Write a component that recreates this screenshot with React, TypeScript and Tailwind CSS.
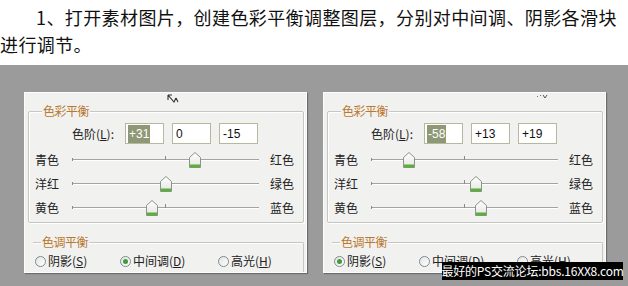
import React from 'react';

const cjk = { fontFamily: '"Noto Sans CJK SC", "Noto Sans", sans-serif' };

type PanelProps = {
  values: [string, string, string];
  thumbs: [number, number, number];
  checked: number;
  cursor: 'arrow' | 'dots';
};

const Thumb: React.FC<{ left: number }> = ({ left }) => (
  <svg className="absolute top-0" style={{ left }} width="12" height="16" viewBox="0 0 12 16">
    <defs>
      <linearGradient id="tg" x1="0" y1="0" x2="0" y2="1">
        <stop offset="0" stopColor="#ffffff" />
        <stop offset="1" stopColor="#e4e6e0" />
      </linearGradient>
    </defs>
    <path d="M0.5 5.5 L6 0.5 L11.5 5.5 V15.5 H0.5 Z" fill="url(#tg)" stroke="#8a9488" />
    <rect x="1" y="12.5" width="10" height="3" fill="#5dae3e" />
  </svg>
);

const Slider: React.FC<{ left: string; right: string; thumb: number }> = ({ left, right, thumb }) => (
  <div className="flex h-[24px] items-center">
    <span className="w-[37px] text-[12px] text-[#222]">{left}</span>
    <div className="relative h-[16px] w-[187px]">
      <div className="absolute left-0 right-0 top-[7px] h-[2px] border-t border-[#a2a4a0] bg-white" />
      <div className="absolute left-0 top-[6px] h-[3px] w-px bg-[#888]" />
      <div className="absolute left-[93px] top-[4px] h-[4px] w-px bg-[#8a8a8a]" />
      <Thumb left={thumb} />
    </div>
    <span className="ml-[11px] text-[12px] text-[#222]">{right}</span>
  </div>
);

const Radio: React.FC<{ on: boolean; label: string; k: string; w: string }> = ({ on, label, k, w }) => (
  <div className={`flex items-center ${w}`}>
    <span className="flex h-[11px] w-[11px] items-center justify-center rounded-full border border-[#7d8b96] bg-gradient-to-br from-[#e4e4e0] to-white">
      {on && <span className="h-[5px] w-[5px] rounded-full bg-[#3f9c3a]" />}
    </span>
    <span className="ml-[2px] text-[12px] leading-[16px] text-[#222]">
      {label}(<span className="underline">{k}</span>)
    </span>
  </div>
);

const Panel: React.FC<PanelProps> = ({ values, thumbs, checked, cursor }) => (
  <div className="relative flex h-[181px] w-[283px] flex-col border border-[#fcfcfc] bg-[#f1f1ef] shadow-[1px_1px_1px_rgba(0,0,0,0.3)]">
    {cursor === 'arrow' ? (
      <svg className="absolute left-[142px] top-[1px]" width="12" height="10" viewBox="0 0 12 10">
        <path d="M1 1 V6 M1 1 H5 M1 1 L7 8 L9 4 M9 4 L11 8" stroke="#333" strokeWidth="1.1" fill="none" />
      </svg>
    ) : (
      <svg className="absolute left-[212px] top-[1px]" width="12" height="6" viewBox="0 0 12 6">
        <rect x="1" y="2" width="1" height="1" fill="#777" />
        <rect x="4" y="1" width="1" height="1" fill="#777" />
        <path d="M7 1 L9 4 L11 1" stroke="#555" strokeWidth="1" fill="none" />
      </svg>
    )}
    <div className="relative ml-[3px] mt-[18px] w-[276px] rounded-[2px] border border-[#c6c6c2] pb-[2px] pt-[11px] shadow-[inset_1px_1px_0_#fff,1px_1px_0_#fff]">
      <span className="absolute left-[13px] top-[-9px] bg-[#f1f1ef] px-[1px] text-[12px] leading-[16px] tracking-[-0.5px] text-[#b9782f]">
        色彩平衡
      </span>
      <div className="flex h-[21px] items-center pl-[43px]">
        <span className="w-[53px] text-[12px] text-[#222]">
          色阶(<span className="underline">L</span>):
        </span>
        <div className="flex gap-[8px]">
          {values.map((v, i) => (
            <div
              key={i}
              className="flex h-[21px] w-[39px] items-center border border-[#b7b89d] bg-white px-[2px] text-[12px] text-[#111]"
              style={{ fontFamily: '"Liberation Sans", sans-serif' }}
            >
              <span className={i === 0 ? 'bg-[#8e9877] px-px text-white' : 'px-px'}>{v}</span>
            </div>
          ))}
        </div>
      </div>
      <div className="mt-[4px] pl-[6px]">
        <Slider left="青色" right="红色" thumb={thumbs[0]} />
        <Slider left="洋红" right="绿色" thumb={thumbs[1]} />
        <Slider left="黄色" right="蓝色" thumb={thumbs[2]} />
      </div>
    </div>
    <div className="relative ml-[8px] mt-[19px] w-[271px] flex-1 rounded-tr-[2px] border-r border-t border-[#c6c6c2] pl-[2px] pt-[10px] shadow-[inset_0_1px_0_#fff]">
      <span className="absolute left-[8px] top-[-9px] bg-[#f1f1ef] px-[1px] text-[12px] leading-[16px] tracking-[-0.5px] text-[#b9782f]">
        色调平衡
      </span>
      <div className="flex">
        <Radio on={checked === 0} label="阴影" k="S" w="w-[85px]" />
        <Radio on={checked === 1} label="中间调" k="D" w="w-[98px]" />
        <Radio on={checked === 2} label="高光" k="H" w="w-[80px]" />
      </div>
    </div>
  </div>
);

export default function App() {
  return (
    <div className="h-[286px] w-[628px] overflow-hidden bg-white" style={cjk}>
      <div className="h-[65px] pt-[4px] text-[18px] leading-[27px] tracking-[0.4px] text-[#111]">
        <p className="whitespace-nowrap indent-[2em]">1、打开素材图片，创建色彩平衡调整图层，分别对中间调、阴影各滑块</p>
        <p className="whitespace-nowrap">进行调节。</p>
      </div>
      <div className="relative flex h-[221px] gap-[16px] bg-[#9b9b9b] pl-[24px] pt-[27px]">
        <Panel values={['+31', '0', '-15']} thumbs={[117, 88, 74]} checked={1} cursor="arrow" />
        <Panel values={['-58', '+13', '+19']} thumbs={[32, 99, 104]} checked={0} cursor="dots" />
        <div className="absolute bottom-[6px] right-[5px] flex h-[18px] w-[181px] items-center justify-center whitespace-nowrap bg-black text-[12px] leading-none tracking-[-0.2px] text-white">
          最好的PS交流论坛:bbs.16XX8.com
        </div>
      </div>
    </div>
  );
}
